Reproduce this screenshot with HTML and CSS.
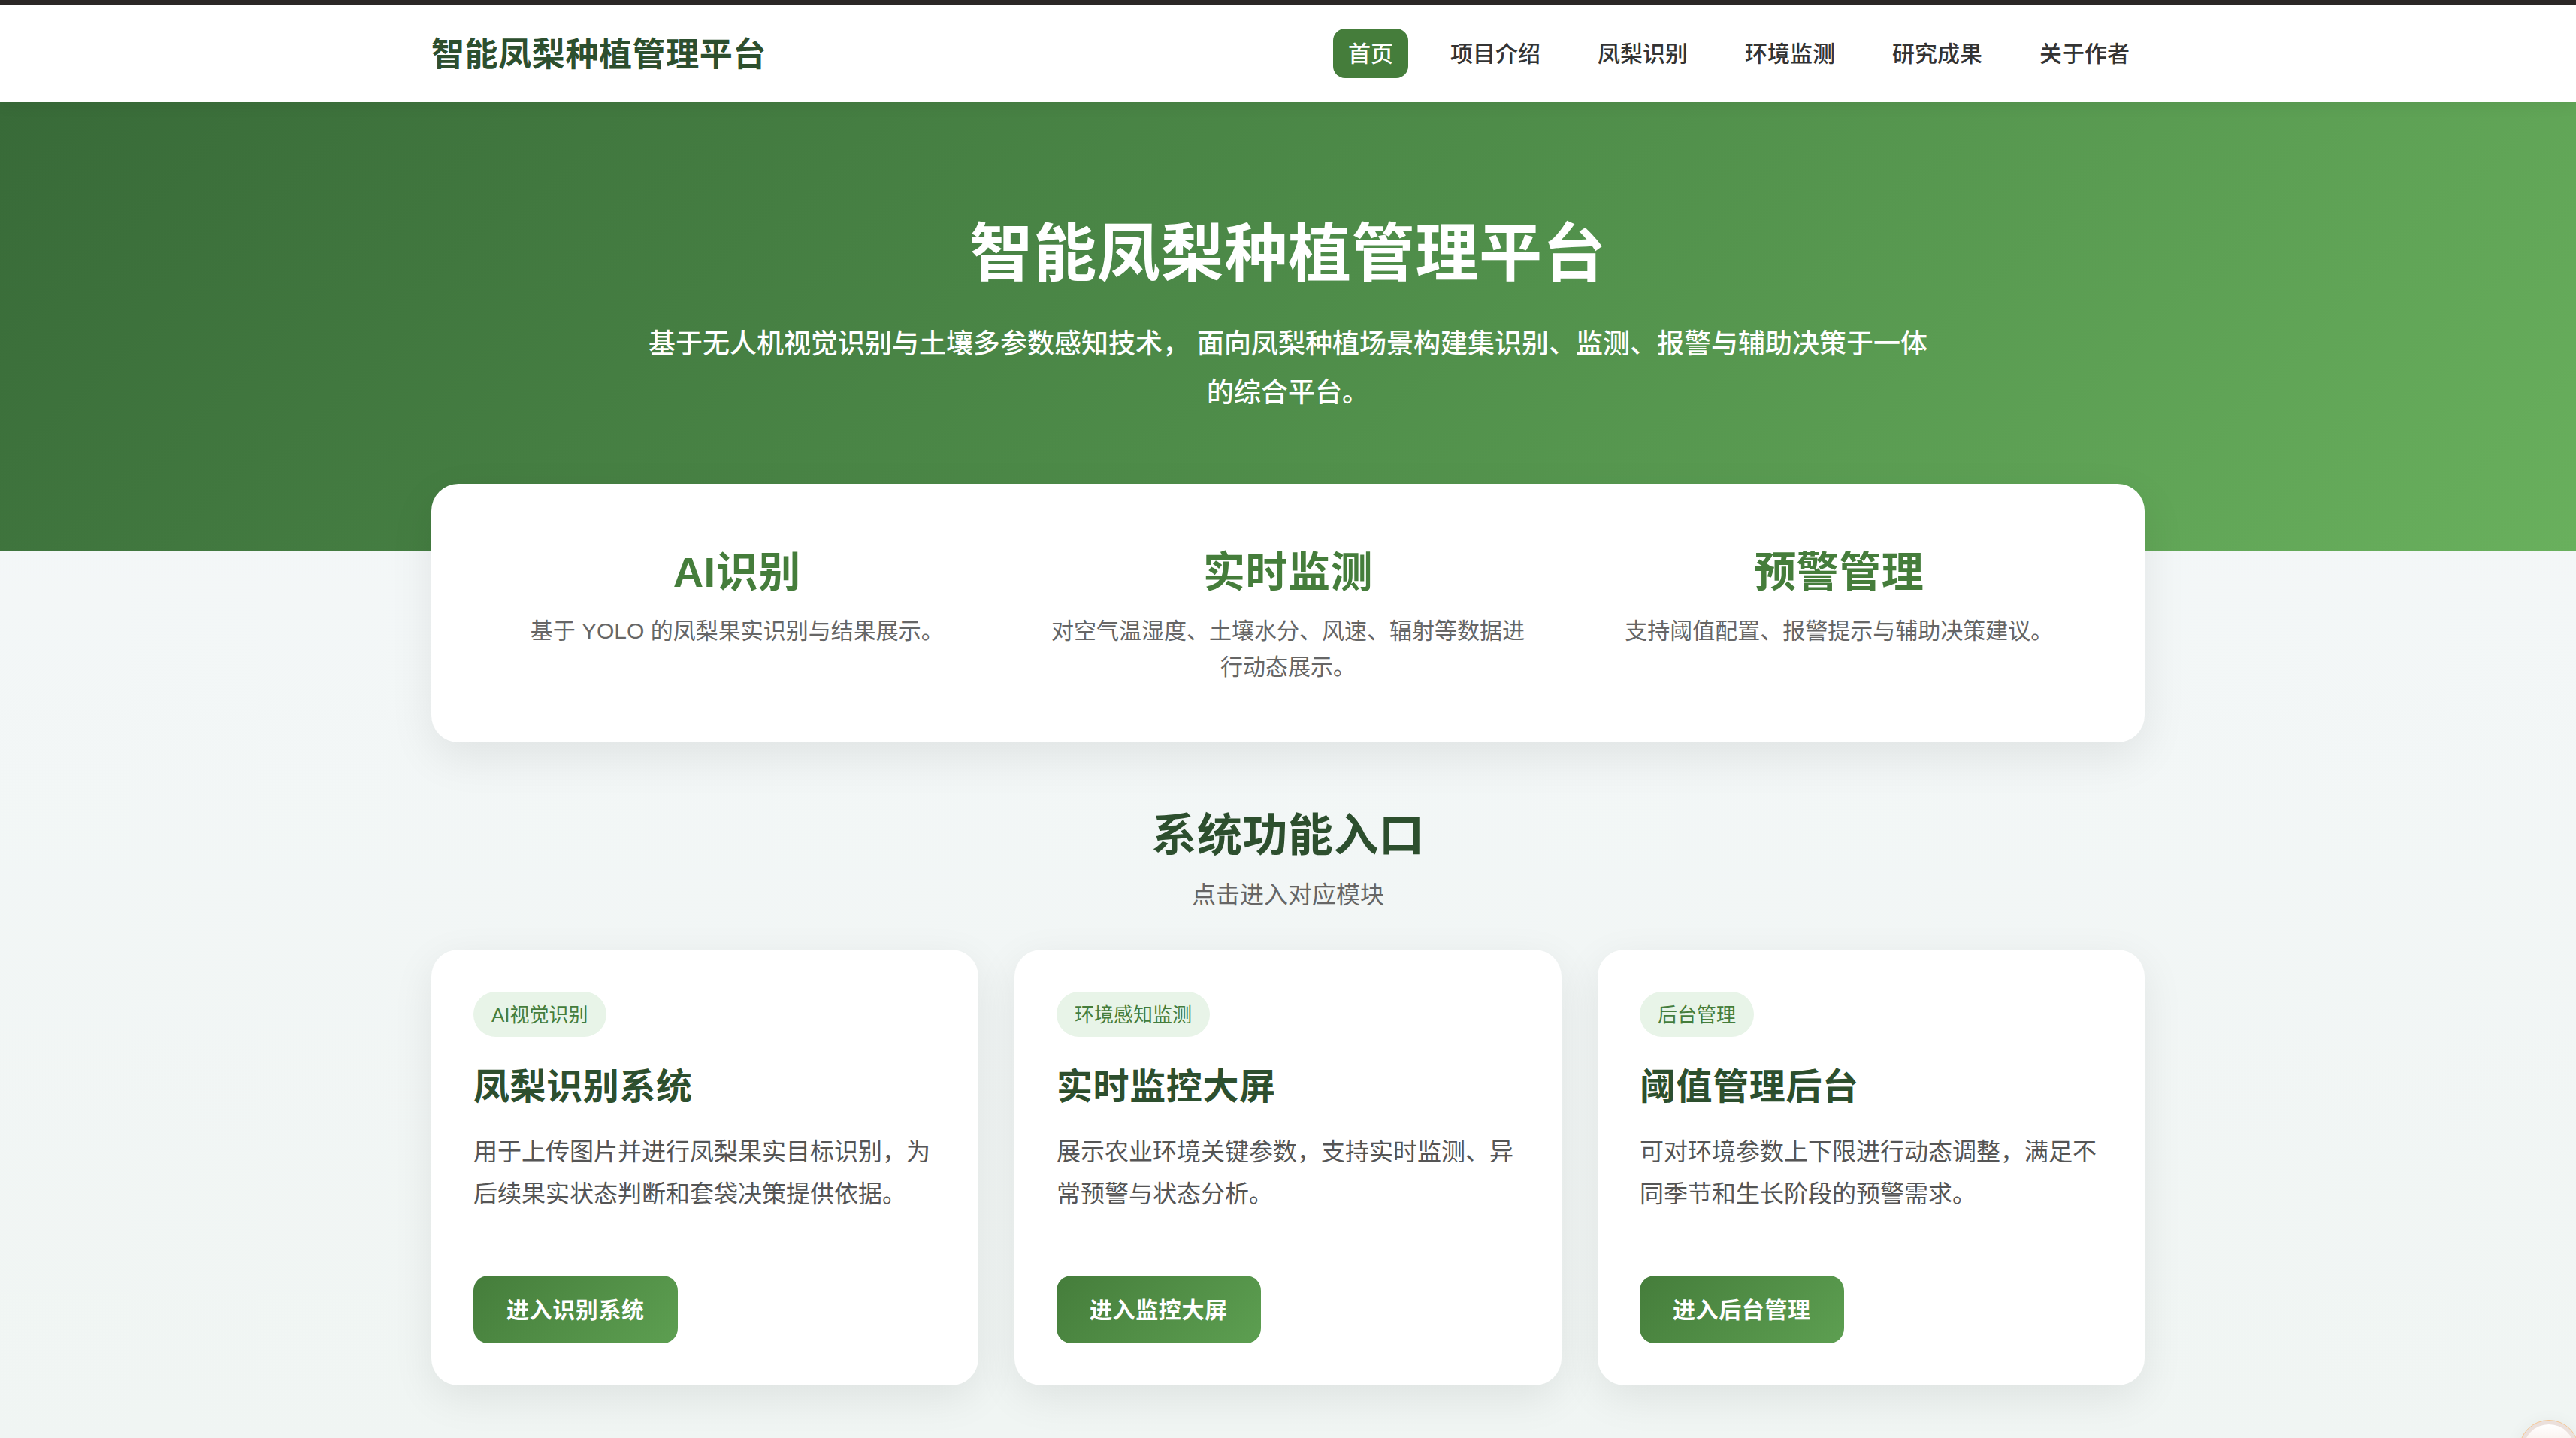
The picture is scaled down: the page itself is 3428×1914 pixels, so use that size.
FILE: index.html
```html
<!DOCTYPE html>
<html lang="zh-CN">
<head>
<meta charset="utf-8">
<title>智能凤梨种植管理平台</title>
<link rel="stylesheet" href="styles.css">
</head>
<body>
<header class="header">
  <div class="container header-inner">
    <div class="logo">智能凤梨种植管理平台</div>
    <nav class="nav">
      <a class="nav-link active">首页</a>
      <a class="nav-link">项目介绍</a>
      <a class="nav-link">凤梨识别</a>
      <a class="nav-link">环境监测</a>
      <a class="nav-link">研究成果</a>
      <a class="nav-link">关于作者</a>
    </nav>
  </div>
</header>
<section class="hero">
  <h1 class="hero-title">智能凤梨种植管理平台</h1>
  <p class="hero-text">基于无人机视觉识别与土壤多参数感知技术， 面向凤梨种植场景构建集识别、监测、报警与辅助决策于一体的综合平台。</p>
</section>
<main class="container">
  <section class="stats">
    <div class="stat">
      <h3 class="stat-title">AI识别</h3>
      <p class="stat-text">基于 YOLO 的凤梨果实识别与结果展示。</p>
    </div>
    <div class="stat">
      <h3 class="stat-title">实时监测</h3>
      <p class="stat-text">对空气温湿度、土壤水分、风速、辐射等数据进行动态展示。</p>
    </div>
    <div class="stat">
      <h3 class="stat-title">预警管理</h3>
      <p class="stat-text">支持阈值配置、报警提示与辅助决策建议。</p>
    </div>
  </section>
  <section class="section-head">
    <h2 class="section-title">系统功能入口</h2>
    <p class="section-text">点击进入对应模块</p>
  </section>
  <section class="cards">
    <article class="card">
      <span class="badge">AI视觉识别</span>
      <h3 class="card-title">凤梨识别系统</h3>
      <p class="card-text">用于上传图片并进行凤梨果实目标识别，为后续果实状态判断和套袋决策提供依据。</p>
      <a class="button">进入识别系统</a>
    </article>
    <article class="card">
      <span class="badge">环境感知监测</span>
      <h3 class="card-title">实时监控大屏</h3>
      <p class="card-text">展示农业环境关键参数，支持实时监测、异常预警与状态分析。</p>
      <a class="button">进入监控大屏</a>
    </article>
    <article class="card">
      <span class="badge">后台管理</span>
      <h3 class="card-title">阈值管理后台</h3>
      <p class="card-text">可对环境参数上下限进行动态调整，满足不同季节和生长阶段的预警需求。</p>
      <a class="button">进入后台管理</a>
    </article>
  </section>
</main>
<div class="float-button"><div class="float-inner"></div></div>
</body>
</html>
```

FILE: styles.css
```css
* { box-sizing: border-box; margin: 0; padding: 0; }
html { overflow: hidden; }
body {
  height: 1914px;
  overflow: hidden;
  position: relative;
  font-family: "Liberation Sans", "Noto Sans CJK SC", sans-serif;
  color: #333;
  background: linear-gradient(180deg, #f5f8fa 0%, #f0f5f3 100%);
}
.container { width: 2280px; margin: 0 auto; }
.header {
  position: relative;
  z-index: 1;
  height: 136px;
  border-top: 6px solid #2b2726;
  background: #fff;
  box-shadow: 0 4px 20px rgba(0, 0, 0, .06);
}
.header-inner { height: 130px; display: flex; align-items: center; justify-content: space-between; }
.logo { padding-top: 4px; font-size: 44px; line-height: 60px; font-weight: 700; letter-spacing: .6px; color: #2d4f2e; }
.nav { display: flex; gap: 36px; }
.nav-link { padding: 13px 20px 11px; border-radius: 16px; font-size: 30px; line-height: 42px; font-weight: 500; }
.nav-link.active { background: #457d3b; color: #fff; }
.hero {
  height: 598px;
  padding-top: 143px;
  text-align: center;
  color: #fff;
  background: linear-gradient(135deg, #386a38 0%, #4e8c49 50%, #69b05d 100%);
}
.hero-title { font-size: 84px; line-height: 118px; font-weight: 700; letter-spacing: .7px; }
.hero-text { width: 1720px; margin: 29px auto 0; font-size: 36px; line-height: 64.8px; font-weight: 500; }
.stats {
  display: grid;
  grid-template-columns: repeat(3, 1fr);
  gap: 32px;
  position: relative;
  height: 344px;
  margin-top: -90px;
  padding: 56px;
  border-radius: 36px;
  background: #fff;
  box-shadow: 0 20px 60px rgba(0, 0, 0, .08);
}
.stat { padding: 22px 24px 18px; text-align: center; }
.stat-title { margin-bottom: 14px; font-size: 56px; line-height: 80px; letter-spacing: .5px; color: #457d3b; }
.stat-text { font-size: 30px; line-height: 48px; color: #666; }
.section-head { height: 276px; padding-top: 83px; text-align: center; }
.section-title { font-size: 60px; line-height: 84px; letter-spacing: .5px; color: #2d4f2e; }
.section-text { margin-top: 14px; font-size: 32px; line-height: 44px; color: #666; }
.cards { display: grid; grid-template-columns: repeat(3, 1fr); gap: 48px; }
.card {
  display: flex;
  flex-direction: column;
  align-items: flex-start;
  height: 580px;
  padding: 56px;
  border-radius: 36px;
  background: #fff;
  box-shadow: 0 16px 56px rgba(0, 0, 0, .08);
}
.badge { padding: 13px 24px 11px; border-radius: 30px; font-size: 26px; line-height: 36px; color: #457d3b; background: #e8f4e8; }
.card-title { margin-top: 34px; font-size: 48px; line-height: 66px; letter-spacing: .6px; color: #2d4f2e; }
.card-text { margin-top: 25px; font-size: 32px; line-height: 56px; color: #555; }
.button {
  margin-top: auto;
  padding: 25px 44px 23px;
  border-radius: 20px;
  font-size: 30px;
  line-height: 42px;
  font-weight: 700;
  letter-spacing: .6px;
  color: #fff;
  background: linear-gradient(135deg, #457d3b, #5d9f51);
}
.float-button {
  position: absolute;
  left: 3352px;
  top: 1890px;
  width: 80px;
  height: 80px;
  padding: 5px;
  border: 1px solid #f5c795;
  border-radius: 50%;
  background: #ebe0dc;
  box-shadow: 0 4px 24px rgba(0, 0, 0, .06);
}
.float-inner { height: 68px; border-radius: 50%; background: linear-gradient(180deg, #fff, #f0d5ca); }
```
